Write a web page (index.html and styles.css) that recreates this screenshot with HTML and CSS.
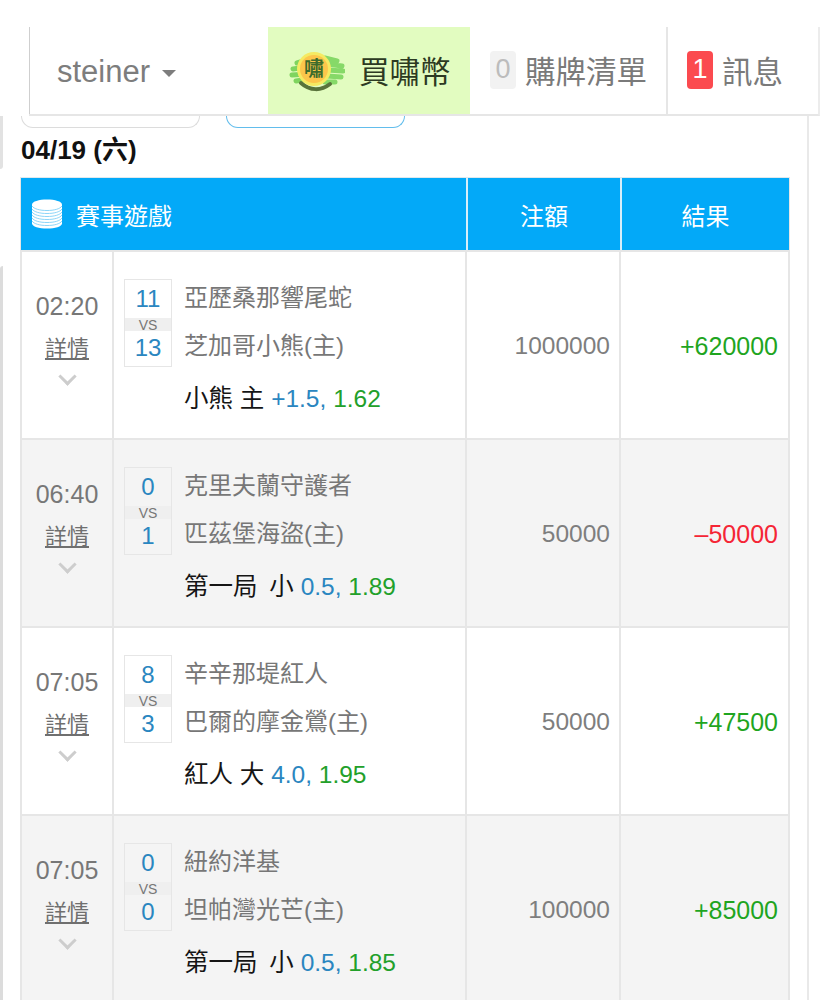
FILE: index.html
```html
<!DOCTYPE html>
<html lang="zh-Hant">
<head>
<meta charset="utf-8">
<title>賽事遊戲</title>
<link rel="stylesheet" href="styles.css">
</head>
<body>
<nav class="nav">
  <div class="nav-user"><span>steiner</span><span class="caret"></span></div>
  <div class="nav-buy">
    <svg class="coin-logo" viewBox="0 0 56 40" aria-hidden="true">
      <defs><filter id="soft"><feGaussianBlur stdDeviation="0.7"/></filter></defs>
      <g filter="url(#soft)">
        <g fill="none" stroke-linecap="round">
          <path d="M8 11l10-3M4 17l14-2M3 23l16-1M7 29l14-2" stroke="#7fd45f" stroke-width="5"/>
          <path d="M36 6l12 3M38 12l15 2M38 18l16 1M38 24l14 1M36 30l10 0" stroke="#86d968" stroke-width="5"/>
          <path d="M12 31c9 8 20 8 29 1" stroke="#59733a" stroke-width="4"/>
        </g>
        <circle cx="25" cy="17" r="17" fill="#f5ea62"/>
        <circle cx="25" cy="17" r="14" fill="#fcc64c"/>
      </g>
    </svg>
    <span class="logo-glyph">嘯</span>
    <span>買嘯幣</span>
  </div>
  <div class="nav-cart"><span class="badge badge-zero">0</span>購牌清單</div>
  <div class="nav-msg"><span class="badge badge-one">1</span>訊息</div>
</nav>

<div class="page">
  <aside class="rail">
    <div class="rail-top"></div>
    <div class="rail-bottom"></div>
  </aside>
  <main class="panel">
    <div class="chips">
      <div class="chip"></div>
      <div class="chip chip-active"></div>
    </div>
    <h2 class="date">04/19 (六)</h2>
    <section class="table">
      <div class="row head">
        <div class="head-game">
          <svg class="stack" viewBox="0 0 32 30" aria-hidden="true">
            <path d="M1 5.500C1 2.500 8 .5 16 .5s15 2 15 5v19c0 3-7 5-15 5s-15-2-15-5z" fill="#fff"/>
            <g fill="none" stroke="#7fd0f7" stroke-width="0.9">
              <path d="M1 7c2 3 8 4.500 15 4.500S29 10 31 7"/>
              <path d="M1 10c2 3 8 4.500 15 4.500S29 13 31 10"/>
              <path d="M1 13c2 3 8 4.500 15 4.500S29 16 31 13"/>
              <path d="M1 16c2 3 8 4.500 15 4.500S29 19 31 16"/>
              <path d="M1 19c2 3 8 4.500 15 4.500S29 22 31 19"/>
              <path d="M1 22c2 3 8 4.500 15 4.500S29 25 31 22"/>
            </g>
          </svg>
          賽事遊戲
        </div>
        <div class="head-cell">注額</div>
        <div class="head-cell">結果</div>
      </div>

      <article class="row game">
        <div class="when"><span class="time">02:20</span><a class="detail">詳情</a><span class="chev"></span></div>
        <div class="match">
          <div class="score"><span>11</span><small>VS</small><span>13</span></div>
          <div class="teams"><p>亞歷桑那響尾蛇</p><p>芝加哥小熊(主)</p></div>
          <p class="pick">小熊 主 <span class="line">+1.5,</span> <span class="odds">1.62</span></p>
        </div>
        <div class="stake">1000000</div>
        <div class="result win">+620000</div>
      </article>

      <article class="row game alt">
        <div class="when"><span class="time">06:40</span><a class="detail">詳情</a><span class="chev"></span></div>
        <div class="match">
          <div class="score"><span>0</span><small>VS</small><span>1</span></div>
          <div class="teams"><p>克里夫蘭守護者</p><p>匹茲堡海盜(主)</p></div>
          <p class="pick">第一局 <span class="side">小</span> <span class="line">0.5,</span> <span class="odds">1.89</span></p>
        </div>
        <div class="stake">50000</div>
        <div class="result lose">–50000</div>
      </article>

      <article class="row game">
        <div class="when"><span class="time">07:05</span><a class="detail">詳情</a><span class="chev"></span></div>
        <div class="match">
          <div class="score"><span>8</span><small>VS</small><span>3</span></div>
          <div class="teams"><p>辛辛那堤紅人</p><p>巴爾的摩金鶯(主)</p></div>
          <p class="pick">紅人 大 <span class="line">4.0,</span> <span class="odds">1.95</span></p>
        </div>
        <div class="stake">50000</div>
        <div class="result win">+47500</div>
      </article>

      <article class="row game alt">
        <div class="when"><span class="time">07:05</span><a class="detail">詳情</a><span class="chev"></span></div>
        <div class="match">
          <div class="score"><span>0</span><small>VS</small><span>0</span></div>
          <div class="teams"><p>紐約洋基</p><p>坦帕灣光芒(主)</p></div>
          <p class="pick">第一局 <span class="side">小</span> <span class="line">0.5,</span> <span class="odds">1.85</span></p>
        </div>
        <div class="stake">100000</div>
        <div class="result win">+85000</div>
      </article>
    </section>
  </main>
</div>
</body>
</html>
```
FILE: styles.css
```css
* { box-sizing: border-box; }
html, body { margin: 0; height: 1000px; overflow: hidden; background: #fff; }
body {
  font-family: "Liberation Sans", "Noto Sans CJK TC", sans-serif;
  font-size: 24px;
  color: #777;
}
p, h2 { margin: 0; font-weight: 400; }

/* nav */
.nav {
  display: flex;
  height: 89px;
  margin: 27px 0 0 29px;
  font-size: 30.5px;
  border-bottom: 2px solid #e6e6e6;
  border-right: 2px solid #ececec;
}
.nav > div { display: flex; align-items: center; padding-bottom: 2px; }
.nav-user {
  width: 239px;
  padding-left: 27px;
  padding-top: 4px;
  border-left: 1px solid #cfcfcf;
  color: #7d7d7d;
  font-size: 31px;
}
.caret {
  margin: 3px 0 0 12px;
  border-left: 7px solid transparent;
  border-right: 7px solid transparent;
  border-top: 7px solid #7d7d7d;
}
.nav-buy {
  position: relative;
  width: 202px;
  padding-left: 91px;
  background: #e2fcc0;
  color: #2c3a22;
}
.coin-logo { position: absolute; left: 21px; top: 25px; width: 56px; height: 40px; }
.logo-glyph {
  position: absolute;
  left: 36px;
  top: 30px;
  font-size: 20px;
  line-height: 24px;
  font-weight: 700;
  color: #3c6b2c;
}
.nav-cart {
  width: 198px;
  padding-left: 20px;
  border-right: 2px solid #e6e6e6;
  color: #7a7a7a;
}
.nav-msg { flex: 1; padding-left: 19px; color: #7a7a7a; }
.badge {
  display: flex;
  align-items: center;
  justify-content: center;
  width: 26px;
  height: 38px;
  margin-right: 9px;
  border-radius: 4px;
  font-size: 27px;
}
.badge-zero { background: #f2f2f2; color: #bcbcbc; }
.badge-one { background: #fb4a4f; color: #fff; }

/* page */
.page { display: flex; height: 884px; }
.rail { width: 20px; flex: none; display: flex; flex-direction: column; }
.rail-top { width: 3px; height: 53px; background: #e2e2e2; border-radius: 0 0 3px 0; }
.rail-bottom { width: 3px; flex: 1; margin-top: 97px; background: #dcdcdc; border-radius: 3px 0 0 0; }
.panel { width: 789px; border-right: 2px solid #e9e9e9; }

.chips { display: flex; gap: 26px; height: 12px; margin-left: 1px; }
.chip {
  width: 179px;
  border: 1px solid #dcdcdc;
  border-top: 0;
  border-radius: 0 0 16px 16px;
}
.chip-active { border-color: #62bdec; }
.date {
  height: 49px;
  padding: 7px 0 0 1px;
  font-size: 26px;
  line-height: 30px;
  font-weight: 700;
  color: #111;
}

/* table */
.table {
  width: 770px;
  border-left: 2px solid #e6e6e6;
  border-right: 2px solid #e6e6e6;
}
.row { display: grid; grid-template-columns: 92px 353px 154px 167px; }
.head {
  height: 73px;
  margin: 0 -1px;
  grid-template-columns: 445px 154px 169px;
  border-top: 1px solid #dfe9ee;
  color: #fff;
}
.head > div { background: #03a9f8; display: flex; align-items: center; }
.head-game { padding-left: 10px; }
.head-cell { justify-content: center; border-left: 2px solid #d8eefa; }
.stack { width: 32px; height: 30px; margin-right: 13px; }

.game { height: 188px; border-top: 2px solid #e6e6e6; }
.alt { background: #f4f4f4; }
.when {
  display: flex;
  flex-direction: column;
  align-items: center;
  padding-top: 38px;
  border-right: 2px solid #e6e6e6;
}
.time { font-size: 25px; line-height: 32px; }
.detail {
  margin-top: 11px;
  line-height: 32px;
  text-decoration: underline;
  font-size: 22px;
  color: #6f6f6f;
}
.chev {
  width: 13px;
  height: 13px;
  margin-top: 5px;
  border-right: 3px solid #cdcdcd;
  border-bottom: 3px solid #cdcdcd;
  transform: rotate(45deg);
}
.match {
  display: grid;
  grid-template-columns: 48px 1fr;
  column-gap: 12px;
  align-content: start;
  padding: 27px 0 0 10px;
  border-right: 2px solid #e6e6e6;
}
.score {
  display: flex;
  flex-direction: column;
  height: 88px;
  border: 1px solid #e6e6e6;
  text-align: center;
  color: #2a86c0;
}
.score span { flex: 1; line-height: 36px; }
.score span:first-child { line-height: 38px; }
.score span:last-child { line-height: 33px; }
.score small {
  height: 13px;
  background: #efefef;
  font-size: 14px;
  line-height: 14px;
  color: #777;
}
.teams p { height: 48px; line-height: 40px; margin-top: -1px; margin-bottom: 1px; }
.pick {
  grid-column: 2;
  margin-top: 4px;
  font-size: 24.5px;
  line-height: 40px;
  color: #151515;
  white-space: nowrap;
}
.side { margin-left: 5px; }
.line { color: #2a86c0; }
.odds { color: #22a02a; }
.stake, .result { display: flex; align-items: center; justify-content: flex-end; padding-top: 2px; }
.stake { padding-right: 9px; border-right: 2px solid #e6e6e6; color: #7e7e7e; font-size: 24.5px; }
.result { padding-right: 10px; font-size: 25px; }
.win { color: #1fa51f; }
.lose { color: #f52535; }
```
